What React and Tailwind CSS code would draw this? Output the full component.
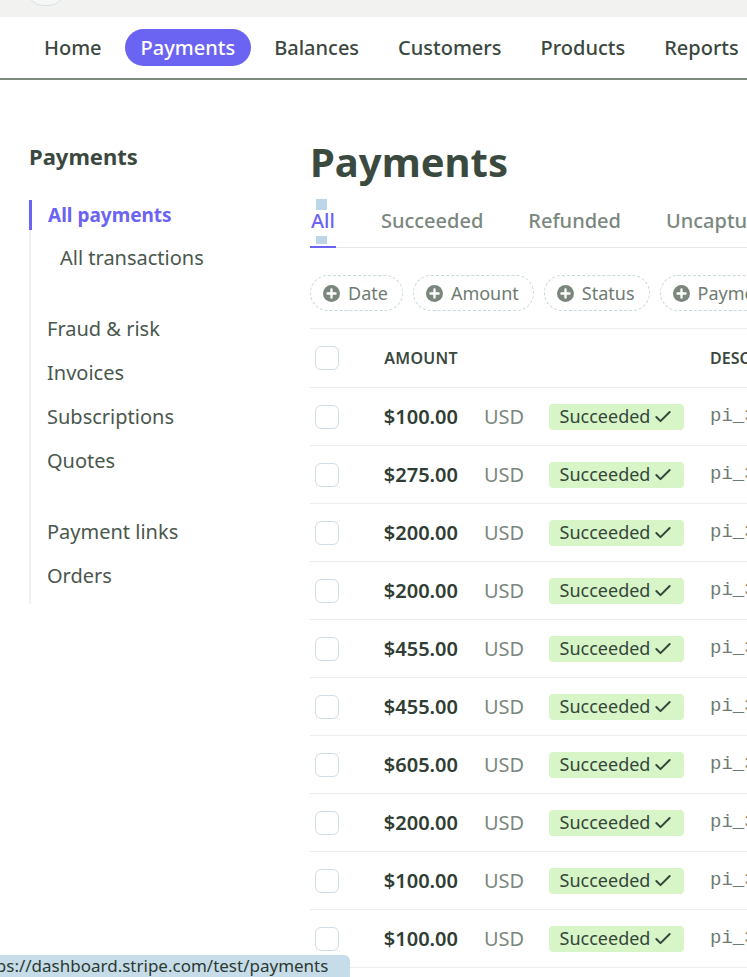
import React from "react";
import { Check } from "lucide-react";

const navItems = ["Home", "Payments", "Balances", "Customers", "Products", "Reports"];

const sideGroups = [
  ["Fraud & risk", "Invoices", "Subscriptions", "Quotes"],
  ["Payment links", "Orders"],
];

const tabs = ["All", "Succeeded", "Refunded", "Uncaptured"];
const filters = ["Date", "Amount", "Status", "Payment method"];

const rows = [
  "$100.00",
  "$275.00",
  "$200.00",
  "$200.00",
  "$455.00",
  "$455.00",
  "$605.00",
  "$200.00",
  "$100.00",
  "$100.00",
];

const PlusDot = () => (
  <svg width="17" height="17" viewBox="0 0 16 16" className="shrink-0">
    <circle cx="8" cy="8" r="8" fill="#7b867d" />
    <path d="M8 4.2v7.6M4.2 8h7.6" stroke="#fff" strokeWidth="2.2" strokeLinecap="round" />
  </svg>
);

const Checkbox = () => (
  <div className="w-[24px] h-[24px] rounded-[6px] border border-[#cfdde4] bg-white shrink-0" />
);

export default function App() {
  return (
    <div
      className="relative w-[747px] h-[977px] overflow-hidden bg-white text-[#3b4840]"
      style={{ fontFamily: '"Noto Sans", "Open Sans", sans-serif' }}
    >
      {/* browser strip */}
      <div className="h-[17px] bg-[#f2f2f1] overflow-hidden">
        <div className="ml-[27px] -mt-[26px] w-[38px] h-[32px] rounded-full border border-[#d6e2ea] bg-[#f6f6f6]" />
      </div>

      {/* top nav */}
      <nav className="h-[63px] border-b-2 border-[#7d887f] flex items-center pl-[28px] gap-[7px] whitespace-nowrap">
        {navItems.map((item) => (
          <div
            key={item}
            className={
              item === "Payments"
                ? "shrink-0 h-[37px] px-4 rounded-full bg-[#6b63f2] text-white flex items-center text-[20px] font-medium"
                : "shrink-0 h-[37px] px-4 flex items-center text-[20px] font-medium text-[#3b4840]"
            }
          >
            {item}
          </div>
        ))}
      </nav>

      <div className="flex">
        {/* sidebar */}
        <aside className="w-[310px] shrink-0 pl-[29px] pt-[62px]">
          <h2 className="text-[22px] font-bold leading-[28px]">Payments</h2>
          <div className="mt-[30px] border-l-2 border-[#efefef] pb-[6px]">
            <div className="-ml-[2px] border-l-[3px] border-[#6b63f2] h-[30px] mt-[7px] mb-[6px] pl-[16px] flex items-center text-[19px] font-bold text-[#6b63f2]">
              All payments
            </div>
            <div className="pl-[29px] leading-[44px] text-[20px] text-[#4a574d]">All transactions</div>
            {sideGroups.map((group, gi) => (
              <div key={gi} className="mt-[27px]">
                {group.map((item) => (
                  <div key={item} className="pl-[16px] leading-[44px] text-[20px] text-[#4a574d]">
                    {item}
                  </div>
                ))}
              </div>
            ))}
          </div>
        </aside>

        {/* main */}
        <main className="flex-1 min-w-0 whitespace-nowrap">
          <h1 className="pt-[56px] text-[40px] font-bold leading-[52px] text-[#3a4a3f]">Payments</h1>

          {/* tabs */}
          <div className="mt-[17px] flex gap-[45px] border-b border-[#e8e8e8]">
            {tabs.map((t) => (
              <div
                key={t}
                className={
                  t === "All"
                    ? "relative shrink-0 pt-[4px] pb-[13px] leading-[24px] text-[20px] font-medium text-[#6b63f2] border-b-2 border-[#6b63f2] -mb-px px-[1px]"
                    : "shrink-0 pt-[4px] pb-[13px] leading-[24px] text-[20px] font-medium text-[#7b877e]"
                }
              >
                {t === "All" && (
                  <>
                    <span className="absolute left-[6px] -top-[6px] w-[11px] h-[11px] bg-[#bcd6e8]" />
                    <span className="absolute left-[6px] top-[31px] w-[11px] h-[8px] bg-[#bcd6e8]" />
                  </>
                )}
                {t}
              </div>
            ))}
          </div>

          {/* filters */}
          <div className="pt-[27px] pb-[17px] flex gap-[10px] border-b border-[#ececec]">
            {filters.map((f) => (
              <div
                key={f}
                className="shrink-0 h-[36px] pl-[12px] pr-[14px] rounded-full border border-dashed border-[#c9d8de] flex items-center gap-[8px] text-[18px] text-[#6f7b72]"
              >
                <PlusDot />
                {f}
              </div>
            ))}
          </div>

          {/* table header */}
          <div className="h-[59px] flex items-center pl-[5px] border-b border-[#ececec]">
            <Checkbox />
            <div className="shrink-0 w-[119px] text-right text-[16px] font-semibold tracking-[0.3px] text-[#3b4840]">AMOUNT</div>
            <div className="shrink-0 ml-[252px] text-[16px] font-semibold text-[#3b4840]">DESCRIPTION</div>
          </div>

          {/* rows */}
          {rows.map((amt, i) => (
            <div key={i} className="h-[58px] flex items-center pl-[5px] border-b border-[#ececec]">
              <Checkbox />
              <div className="shrink-0 w-[119px] text-right text-[20px] font-semibold text-[#2f3d34]">{amt}</div>
              <div className="shrink-0 w-[91px] pl-[26px] text-[20px] text-[#7b877e]">USD</div>
              <div className="shrink-0 w-[135px] h-[26px] rounded-[4px] bg-[#d7f5c6] flex items-center justify-center gap-[3px] text-[18px] text-[#34463a]">
                Succeeded
                <Check size={20} strokeWidth={2.4} />
              </div>
              <div
                className="shrink-0 ml-[26px] text-[19px] text-[#6f7b72]"
                style={{ fontFamily: '"Liberation Mono", monospace' }}
              >
                pi_3NqKx2
              </div>
            </div>
          ))}
        </main>
      </div>

      {/* link preview bar */}
      <div className="absolute left-0 bottom-0 w-[350px] h-[22px] bg-[#c6dce9] rounded-tr-[6px] overflow-hidden flex items-center">
        <span className="-ml-[27px] text-[17px] leading-[22px] text-[#2c3a31] whitespace-nowrap">
          https://dashboard.stripe.com/test/payments
        </span>
      </div>
    </div>
  );
}
